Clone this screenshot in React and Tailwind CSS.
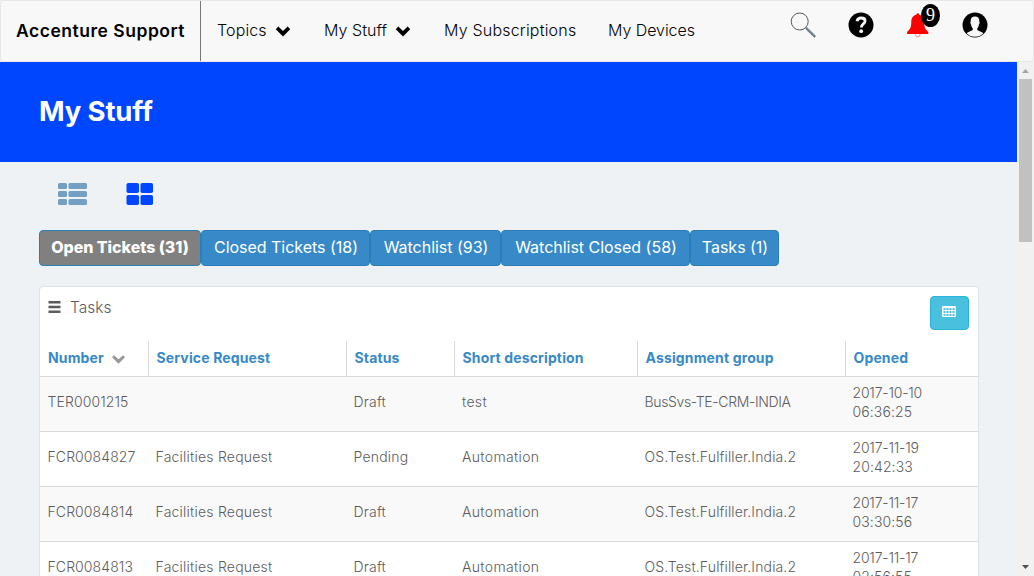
import React from "react";

const columns = ["Number", "Service Request", "Status", "Short description", "Assignment group", "Opened"];

const rows = [
  ["TER0001215", "", "Draft", "test", "BusSvs-TE-CRM-INDIA", "2017-10-10", "06:36:25"],
  ["FCR0084827", "Facilities Request", "Pending", "Automation", "OS.Test.Fulfiller.India.2", "2017-11-19", "20:42:33"],
  ["FCR0084814", "Facilities Request", "Draft", "Automation", "OS.Test.Fulfiller.India.2", "2017-11-17", "03:30:56"],
  ["FCR0084813", "Facilities Request", "Draft", "Automation", "OS.Test.Fulfiller.India.2", "2017-11-17", "02:56:55"],
];

const grid = "grid grid-cols-[109px_198px_108px_183px_208px_132px]";

const tabs = [
  { label: "Closed Tickets (18)", width: "w-[169px]" },
  { label: "Watchlist (93)", width: "w-[131px]" },
  { label: "Watchlist Closed (58)", width: "w-[189px]" },
  { label: "Tasks (1)", width: "w-[89px]" },
];

function Chevron({ className }) {
  return (
    <svg viewBox="0 0 16 11" className={className} fill="currentColor">
      <path d="M.8 3.200 3.300.6 8 4.900 12.700.6l2.500 2.600L8 10.600z" />
    </svg>
  );
}

function SortArrow() {
  return (
    <svg viewBox="0 0 13 9" className="mt-[3px] ml-2 h-[9px] w-[13px]" fill="#999">
      <path d="M0 2.200 2 .3l4.500 4L11 .3l2 1.900-6.500 6.500z" />
    </svg>
  );
}

function Header() {
  return (
    <header className="flex h-[62px] shrink-0 rounded border border-[#e7e7e7] bg-[#f8f8f8] text-base text-black">
      <div className="flex w-[200px] shrink-0 items-center border-r border-[#777] pl-[15px] text-[17.500px] font-semibold tracking-[0.52px] whitespace-nowrap">
        Accenture Support
      </div>
      <nav className="flex w-[588px] shrink-0 items-center pl-4 pb-[2px] font-light tracking-[0.12px] whitespace-nowrap">
        <span className="w-[58px]">Topics</span>
        <Chevron className="mt-[3px] mr-[33px] h-[11px] w-4" />
        <span className="w-[71px] tracking-[0.05px]">My Stuff</span>
        <Chevron className="mt-[3px] mr-[33px] h-[11px] w-4" />
        <span className="w-[164px] tracking-[0.2px]">My Subscriptions</span>
        <span className="tracking-[-0.05px]">My Devices</span>
      </nav>
      <div className="flex items-start pt-[11px] pl-px">
        <svg viewBox="0 0 27 26" className="h-[26px] w-[27px]" fill="none">
          <circle cx="9.700" cy="9.500" r="8.500" stroke="#555" strokeWidth="1" />
          <path d="m16 15.900 9.200 9" stroke="#777" strokeWidth="2.400" />
          <path d="m16.200 15.400 9.200 9" stroke="#5aa5cf" strokeWidth=".7" />
        </svg>
        <svg viewBox="0 0 26 26" className="ml-[31px] h-[26px] w-[26px]">
          <circle cx="13" cy="13" r="12.500" />
          <path d="M9 9.300c.3-2.200 1.800-3.300 4.200-3.300 2.400 0 3.900 1.100 3.900 2.900 0 1.600-.8 2.300-2 3.200-1.200.9-1.700 1.500-1.700 3.300" fill="none" stroke="#f8f8f8" strokeWidth="2.800" />
          <circle cx="13.200" cy="19.200" r="1.900" fill="#f8f8f8" />
        </svg>
        <div className="relative ml-[33px]">
          <svg viewBox="0 0 22 26" className="h-[26px] w-[22px]">
            <path d="M9.400 2.700C9.400.8 12 .8 12 2.700c3.600.7 5.100 3.700 5.100 7.200 0 5 1.200 7.600 4.200 9.800v2.200H.1v-2.200c3-2.200 4.200-4.800 4.200-9.800 0-3.500 1.500-6.500 5.100-7.200z" fill="red" />
            <path d="M8.500 22.300a2.300 2.600 0 0 0 4.600 0" fill="#fff" stroke="#f66" strokeWidth=".8" />
          </svg>
          <span className="absolute -top-[8px] left-[14px] flex h-[23px] w-[19px] items-center justify-center rounded-[50%] bg-black pb-px font-[Liberation_Serif,serif] text-[18px] text-white">
            9
          </span>
        </div>
        <svg viewBox="0 0 26 26" className="ml-[33px] h-[26px] w-[26px]">
          <circle cx="13" cy="13" r="12.500" />
          <path d="M4.600 21.200c1.700-1.400 4.600-2 6.100-3.200v-1.700c-1-1.100-1.500-2.300-1.600-3.800-.9-1-.8-2.400-.4-2.900C8.400 6.300 10 4.600 13 4.600s4.600 1.700 4.300 5c.4.5.5 1.900-.4 2.900-.1 1.500-.6 2.700-1.600 3.800V18c1.500 1.200 4.400 1.800 6.100 3.200a11.800 11.800 0 0 1-16.800 0z" fill="#f8f8f8" />
        </svg>
      </div>
    </header>
  );
}

function TasksCard() {
  return (
    <section className="mt-5 w-[940px] rounded border border-[#dde2e5] bg-white text-[#5c5c5c]">
      <div className="flex h-[54px] items-start justify-between pt-[9px] pr-[9px] pl-2">
        <div className="flex items-center text-[15.500px] leading-6 font-light">
          <svg viewBox="0 0 13 12" className="mr-[9px] mb-[2px] h-3 w-[13px]" fill="currentColor">
            <path d="M.5 0h12v2.500H.5zM.5 4.700h12v2.500H.5zM.5 9.400h12v2.500H.5z" />
          </svg>
          Tasks
        </div>
        <button className="flex h-[34px] w-[39px] justify-center rounded border border-[#28b4d6] bg-[#49c0de] pt-[9px] pr-px">
          <svg viewBox="0 0 14 11" className="h-[11px] w-[14px]" fill="#fff">
            <path fillRule="evenodd" d="M1 0h12a1 1 0 0 1 1 1v9a1 1 0 0 1-1 1H1a1 1 0 0 1-1-1V1a1 1 0 0 1 1-1zM1.500 2v2h2V2zM4.500 2v2h2V2zM7.500 2v2h2V2zM10.500 2v2h2V2zM1.500 5v2h2V5zM4.500 5v2h2V5zM7.500 5v2h2V5zM10.500 5v2h2V5zM1.500 8v2h2V8zM4.500 8v2h2V8zM7.500 8v2h2V8zM10.500 8v2h2V8z" />
          </svg>
        </button>
      </div>
      <div className={grid + " h-[36px] border-b border-[#d9d9d9] text-[14px] font-bold tracking-[0.14px] text-[#378ac7]"}>
        {columns.map((c, i) => (
          <div key={c} className={(i < 5 ? "border-r border-[#d9d9d9] " : "") + (i === 0 ? "pl-2 " : "pl-[7.500px] ") + "flex items-center pb-[2px] whitespace-nowrap"}>
            <span>{c}</span>
            {i === 0 && <SortArrow />}
          </div>
        ))}
      </div>
      {rows.map((r, i) => (
        <div key={r[0]} className={grid + " h-[55px] items-center border-b border-[#d9d9d9] text-[14px] leading-[19px] font-light whitespace-nowrap " + (i % 2 ? "bg-white" : "bg-[#f9f9f9]")}>
          <span className="pb-[5px] pl-[7.500px] tracking-[0.1px]">{r[0]}</span>
          <span className="pb-[5px] pl-[6.500px] tracking-[0.22px]">{r[1]}</span>
          <span className="pb-[5px] pl-[6.500px] tracking-[0.2px]">{r[2]}</span>
          <span className="pb-[5px] pl-[7px] tracking-[0.35px]">{r[3]}</span>
          <span className={"pb-[5px] pl-[6.500px] " + (i ? "tracking-[0.14px]" : "tracking-[-0.35px]")}>{r[4]}</span>
          <span className="pb-[4px] pl-[6.500px] tracking-[-0.2px]">
            {r[5]}
            <br />
            <span className="tracking-[0.1px]">{r[6]}</span>
          </span>
        </div>
      ))}
    </section>
  );
}

export default function App() {
  return (
    <div className="flex h-[576px] w-[1034px] flex-col overflow-hidden bg-[#f1f1f1] font-[Inter,sans-serif]">
      <Header />
      <div className="flex min-h-0 flex-1">
        <main className="w-[1017px] overflow-hidden bg-[#eef2f4]">
          <div className="flex h-[100px] items-center bg-[#0046ff] pl-[39px] pb-px text-[27.500px] font-bold tracking-[-0.150px] text-white">
            My Stuff
          </div>
          <div className="pl-[39px]">
            <div className="flex h-[68px] items-start pt-[21px] pl-[19px]">
              <svg viewBox="0 0 29 22" className="mr-[39px] h-[22px] w-[29px]" fill="#739fc3">
                <rect width="9" height="6" rx="1.500" />
                <rect x="10.500" width="18.500" height="6" rx="1.500" />
                <rect y="8" width="9" height="6" rx="1.500" />
                <rect x="10.500" y="8" width="18.500" height="6" rx="1.500" />
                <rect y="16" width="9" height="6" rx="1.500" />
                <rect x="10.500" y="16" width="18.500" height="6" rx="1.500" />
              </svg>
              <svg viewBox="0 0 27 22" className="h-[22px] w-[27px]" fill="#0046ff">
                <rect x=".5" width="12.500" height="10" rx="1.800" />
                <rect x="14.500" width="12.500" height="10" rx="1.800" />
                <rect x=".5" y="12" width="12.500" height="10" rx="1.800" />
                <rect x="14.500" y="12" width="12.500" height="10" rx="1.800" />
              </svg>
            </div>
            <div className="flex h-9 text-[16px] text-white">
              <button className="w-[162px] rounded-[4px] border border-[#2580bd] bg-[#808080] pb-[2px] font-extrabold tracking-[-0.050px] whitespace-nowrap">
                Open Tickets (31)
              </button>
              {tabs.map((t) => (
                <button key={t.label} className={t.width + " rounded-[4px] border border-[#2b7cb8] bg-[#378ac7] pb-[2px] pl-px tracking-[-0.02px] whitespace-nowrap"}>
                  {t.label}
                </button>
              ))}
            </div>
            <TasksCard />
          </div>
        </main>
        <div className="flex w-[17px] flex-col items-center bg-[#f1f1f1]">
          <svg viewBox="0 0 17 17" className="h-[17px] w-[17px] shrink-0">
            <path d="M5 11h7L8.500 7z" fill="#a3a3a3" />
          </svg>
          <div className="h-[163px] w-[13px] bg-[#c1c1c1]" />
          <svg viewBox="0 0 17 17" className="mt-auto h-[17px] w-[17px] shrink-0">
            <path d="M5 6h7l-3.500 4z" fill="#505050" />
          </svg>
        </div>
      </div>
    </div>
  );
}
